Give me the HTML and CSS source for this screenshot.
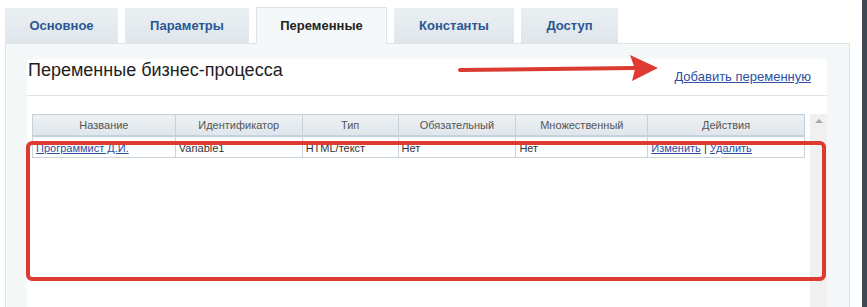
FILE: index.html
```html
<!DOCTYPE html>
<html lang="ru">
<head>
<meta charset="utf-8">
<title>Переменные бизнес-процесса</title>
<link rel="stylesheet" href="styles.css">
</head>
<body>
<div class="page">
  <div class="main">
    <div class="tabs">
      <div class="tab t1">Основное</div>
      <div class="tab t2">Параметры</div>
      <div class="tab t3 active">Переменные</div>
      <div class="tab t4">Константы</div>
      <div class="tab t5">Доступ</div>
    </div>
    <div class="panel">
      <div class="box">
        <div class="box-head">
          <div class="title">Переменные бизнес-процесса</div>
          <a class="add-link" href="#">Добавить переменную</a>
        </div>
        <div class="grid-area">
          <table class="grid">
            <thead>
              <tr>
                <th class="c1">Название</th>
                <th class="c2">Идентификатор</th>
                <th class="c3">Тип</th>
                <th class="c4">Обязательный</th>
                <th class="c5">Множественный</th>
                <th class="c6">Действия</th>
              </tr>
            </thead>
            <tbody>
              <tr>
                <td><a href="#">Программист Д.И.</a></td>
                <td>Variable1</td>
                <td>HTML/текст</td>
                <td>Нет</td>
                <td>Нет</td>
                <td><a href="#">Изменить</a> | <a href="#">Удалить</a></td>
              </tr>
            </tbody>
          </table>
          <div class="scrollbar"><span class="arrow-up"></span></div>
        </div>
      </div>
    </div>
  </div>
  <div class="strip"></div>
  <div class="red-box"></div>
  <svg class="red-arrow" width="210" height="30" viewBox="0 0 210 30">
    <line x1="3" y1="16" x2="178" y2="14" stroke="#db3a31" stroke-width="4" stroke-linecap="round"/>
    <polygon points="173,1 201,14 175,27 178,15" fill="#e03b30"/>
  </svg>
</div>
</body>
</html>
```
FILE: styles.css
```css
* { box-sizing: border-box; }
html, body { margin: 0; padding: 0; background: #fff; }
body { font-family: "Liberation Sans", Arial, sans-serif; width: 867px; height: 307px; overflow: hidden; }

.page { position: relative; display: flex; height: 307px; }
.main { width: 862px; padding: 7px 12px 0 5px; display: flex; flex-direction: column; }
.strip { width: 5px; background: #3d4852; }

.tabs { display: flex; align-items: flex-end; gap: 7px; height: 37px; margin-bottom: -1px; position: relative; z-index: 1; }
.tab {
  height: 36px;
  background: linear-gradient(#eaeff2, #dfe6ea);
  color: #2a5694;
  font-size: 13px;
  font-weight: bold;
  display: flex; align-items: center; justify-content: center;
  padding-bottom: 1px;
  border-bottom: 1px solid #dce4e8;
}
.t1 { width: 113px; }
.t2 { width: 124px; }
.t3 { width: 131px; }
.t4 { width: 120px; }
.t5 { width: 97px; }
.tab.active {
  height: 37px;
  background: #f5f8f9;
  color: #222;
  border: 1px solid #dce4e8;
  border-bottom: 1px solid #f5f8f9;
  padding-bottom: 0;
}

.panel {
  flex: 1;
  background: #f5f8f9;
  border: 1px solid #dce4e8;
  border-bottom: none;
  padding: 15px 22px 0 21px;
}
.box { background: #fff; height: 100%; display: flex; flex-direction: column; }
.box-head {
  height: 37px;
  border-bottom: 1px solid #dfe4e8;
  display: flex; justify-content: space-between; align-items: flex-start;
  padding: 0 16px 0 1px;
}
.title { font-size: 18px; color: #1e1e1e; margin-top: 1px; }
.add-link { font-size: 13px; color: #2c4fa3; text-decoration: underline; margin-top: 10px; }

.grid-area { display: flex; padding: 18px 0 0 5px; flex: 1; }
.grid {
  width: 773px;
  border-collapse: collapse;
  border: 1px solid #c8d2dc;
  align-self: flex-start;
  font-size: 11px;
  margin-right: 5px;
}
.grid th {
  height: 21px;
  background: linear-gradient(#edf1f4, #dfe6eb);
  color: #555;
  font-weight: normal;
  text-align: center;
  border: 1px solid #c8d2dc;
  border-bottom: 2px solid #c8d2dc;
  padding: 0;
}
.grid td {
  height: 22px;
  border: 1px solid #c8d2dc;
  border-top: 1px solid #e2e8ed;
  color: #333;
  padding: 3px 3px 0 3px;
  vertical-align: middle;
}
.grid td a { color: #2c4fa3; }
.c1 { width: 143px; }
.c2 { width: 127px; }
.c3 { width: 96px; }
.c4 { width: 118px; }
.c5 { width: 132px; }
.c6 { width: 157px; }

.scrollbar { width: 17px; background: #f0f0f0; position: relative; }
.arrow-up {
  position: absolute; left: 5px; top: 5px;
  width: 0; height: 0;
  border-left: 4px solid transparent; border-right: 4px solid transparent;
  border-bottom: 4px solid #a8a8a8;
}

.red-box {
  position: absolute; left: 26px; top: 141px;
  width: 800px; height: 140px;
  border: 4px solid #dd3b31;
  border-radius: 6px;
  pointer-events: none;
}
.red-arrow { position: absolute; left: 457px; top: 54px; }
```
